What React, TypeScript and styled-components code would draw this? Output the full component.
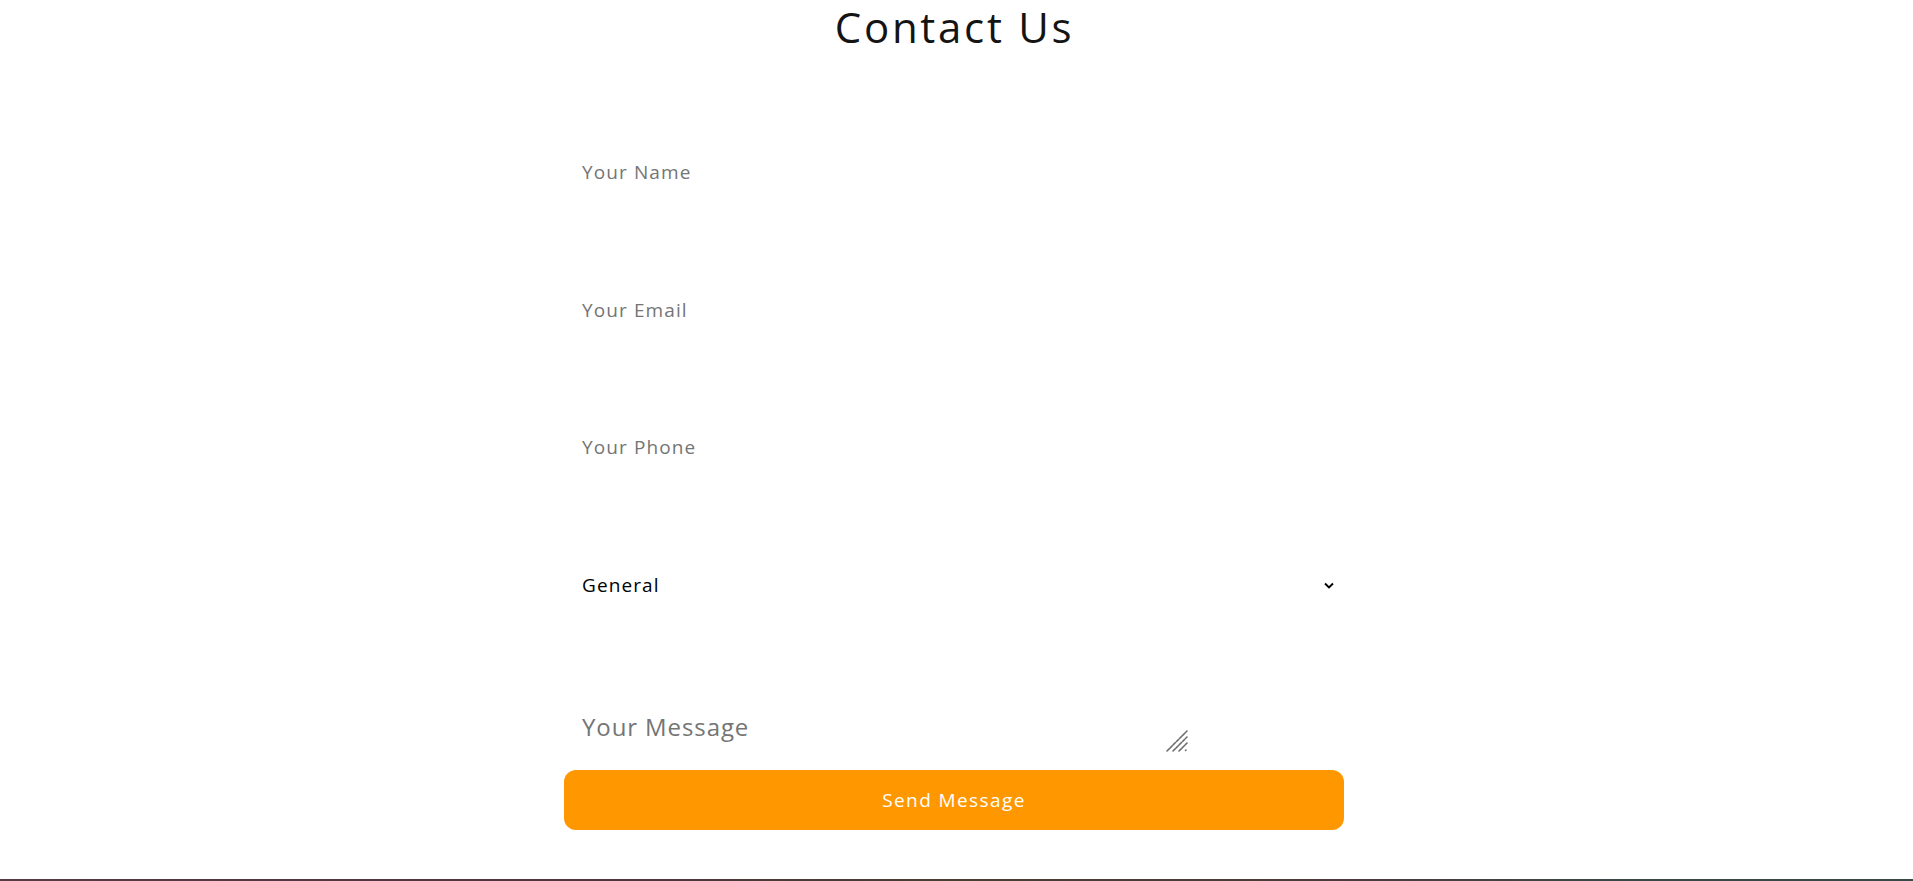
import React from "react";
import styled, { createGlobalStyle } from "styled-components";

const GlobalStyle = createGlobalStyle`
  html, body { margin: 0; padding: 0; background: #ffffff; }
  body { font-family: "Open Sans", "Liberation Sans", sans-serif; }
  * { box-sizing: border-box; }
`;

const Page = styled.div`
  min-height: 881px;
  display: flex;
  flex-direction: column;
`;

const Section = styled.section`
  flex: 1;
  display: flex;
  flex-direction: column;
  align-items: center;
`;

const Title = styled.h1`
  margin: 0 0 0 -4px;
  padding-top: 2px;
  font-size: 42px;
  line-height: 50px;
  font-weight: 400;
  color: #141414;
  letter-spacing: 2.7px;
`;

const Form = styled.form`
  width: 780px;
  margin-left: -5px;
  margin-top: 90px;
  display: flex;
  flex-direction: column;
  gap: 77.7px;
`;

const Input = styled.input`
  width: 100%;
  height: 60px;
  border: none;
  outline: none;
  background: transparent;
  padding: 0 18px;
  font-family: inherit;
  font-size: 19px;
  letter-spacing: 1.1px;
  color: #222;
  &::placeholder { color: #757575; }
`;

const SelectWrap = styled.div`
  position: relative;
  width: 100%;
  height: 60px;
`;

const Select = styled.select`
  appearance: none;
  width: 100%;
  height: 100%;
  border: none;
  outline: none;
  background: transparent;
  padding: 0 18px;
  font-family: inherit;
  font-size: 19px;
  letter-spacing: 1.1px;
  color: #000;
`;

const Chevron = styled.svg`
  position: absolute;
  right: 10px;
  top: 27px;
  pointer-events: none;
`;

const MessageWrap = styled.div`
  position: relative;
  width: 626px;
  height: 60px;
`;

const MessageArea = styled.textarea`
  width: 100%;
  height: 100%;
  border: none;
  outline: none;
  background: transparent;
  padding: 18px 18px 0;
  font-family: inherit;
  font-size: 24px;
  line-height: 32px;
  letter-spacing: 0.9px;
  color: #222;
  resize: none;
  overflow: hidden;
  &::placeholder { color: #757575; }
`;

const ResizeGrip = styled.svg`
  position: absolute;
  right: 2px;
  bottom: 1px;
  pointer-events: none;
`;

const SendButton = styled.button`
  width: 780px;
  height: 60px;
  margin-top: -60px;
  border: none;
  border-radius: 12px;
  background: #ff9800;
  color: #ffffff;
  font-family: inherit;
  font-size: 19px;
  letter-spacing: 1.4px;
  cursor: pointer;
`;

const Footer = styled.footer`
  height: 2px;
  background: linear-gradient(90deg, #553a46 0%, #4e3540 30%, #4a3e31 50%, #4e3a3c 70%, #3a4848 85%, #3a4848 100%);
`;

export default function App() {
  return (
    <Page>
      <GlobalStyle />
      <Section>
        <Title>Contact Us</Title>
        <Form onSubmit={(e) => e.preventDefault()}>
          <Input type="text" placeholder="Your Name" />
          <Input type="email" placeholder="Your Email" />
          <Input type="tel" placeholder="Your Phone" />
          <SelectWrap>
            <Select defaultValue="General">
              <option>General</option>
              <option>Support</option>
              <option>Sales</option>
            </Select>
            <Chevron width="10" height="8" viewBox="0 0 10 8">
              <path d="M1 1.5 L5 5.5 L9 1.5" fill="none" stroke="#000" strokeWidth="1.9" />
            </Chevron>
          </SelectWrap>
          <MessageWrap>
            <MessageArea placeholder="Your Message" />
            <ResizeGrip width="22" height="22" viewBox="0 0 22 22">
              <g stroke="#6e6e6e" strokeWidth="1.6" strokeLinecap="round">
                <line x1="1" y1="21" x2="21" y2="1" strokeDasharray="3 1.5" />
                <line x1="7" y1="21" x2="21" y2="7" strokeDasharray="3 1.5" />
                <line x1="13" y1="21" x2="21" y2="13" strokeDasharray="3 1.5" />
                <line x1="19.5" y1="20.5" x2="20" y2="20" />
              </g>
            </ResizeGrip>
          </MessageWrap>
          <SendButton type="submit">Send Message</SendButton>
        </Form>
      </Section>
      <Footer />
    </Page>
  );
}
